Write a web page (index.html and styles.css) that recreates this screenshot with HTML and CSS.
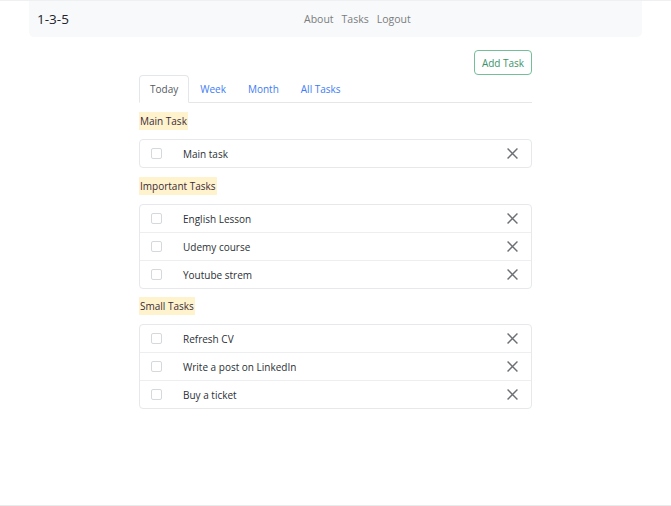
FILE: index.html
```html
<!DOCTYPE html>
<html lang="en">
<head>
<meta charset="utf-8">
<title>1-3-5</title>
<link rel="stylesheet" href="styles.css">
</head>
<body>
<div class="page">
  <nav class="navbar">
    <span class="brand">1-3-5</span>
    <div class="nav-links">
      <a href="#">About</a>
      <a href="#">Tasks</a>
      <a href="#">Logout</a>
    </div>
  </nav>

  <main class="content">
    <div class="toolbar">
      <button class="btn-add">Add Task</button>
    </div>
    <ul class="tabs">
      <li class="tab active">Today</li>
      <li class="tab">Week</li>
      <li class="tab">Month</li>
      <li class="tab">All Tasks</li>
    </ul>

    <section class="group">
      <h2 class="group-title"><mark>Main Task</mark></h2>
      <ul class="list">
        <li class="item"><span class="check"></span><span class="label">Main task</span><svg class="close" viewBox="0 0 10 10"><path d="M0.5 0.5L9.5 9.5M9.5 0.5L0.5 9.5"/></svg></li>
      </ul>
    </section>

    <section class="group">
      <h2 class="group-title"><mark>Important Tasks</mark></h2>
      <ul class="list">
        <li class="item"><span class="check"></span><span class="label">English Lesson</span><svg class="close" viewBox="0 0 10 10"><path d="M0.5 0.5L9.5 9.5M9.5 0.5L0.5 9.5"/></svg></li>
        <li class="item"><span class="check"></span><span class="label">Udemy course</span><svg class="close" viewBox="0 0 10 10"><path d="M0.5 0.5L9.5 9.5M9.5 0.5L0.5 9.5"/></svg></li>
        <li class="item"><span class="check"></span><span class="label">Youtube strem</span><svg class="close" viewBox="0 0 10 10"><path d="M0.5 0.5L9.5 9.5M9.5 0.5L0.5 9.5"/></svg></li>
      </ul>
    </section>

    <section class="group">
      <h2 class="group-title"><mark>Small Tasks</mark></h2>
      <ul class="list">
        <li class="item"><span class="check"></span><span class="label">Refresh CV</span><svg class="close" viewBox="0 0 10 10"><path d="M0.5 0.5L9.5 9.5M9.5 0.5L0.5 9.5"/></svg></li>
        <li class="item"><span class="check"></span><span class="label">Write a post on LinkedIn</span><svg class="close" viewBox="0 0 10 10"><path d="M0.5 0.5L9.5 9.5M9.5 0.5L0.5 9.5"/></svg></li>
        <li class="item"><span class="check"></span><span class="label">Buy a ticket</span><svg class="close" viewBox="0 0 10 10"><path d="M0.5 0.5L9.5 9.5M9.5 0.5L0.5 9.5"/></svg></li>
      </ul>
    </section>
  </main>
  <footer class="footer"></footer>
</div>
</body>
</html>
```

FILE: styles.css
```css
* { box-sizing: border-box; }
html, body { margin: 0; padding: 0; }
body {
  font-family: "Open Sans", "Noto Sans", sans-serif;
  font-size: 10px;
  color: #212529;
  background: #fff;
  border-top: 1px solid #eef0f2;
}
.page {
  height: 505px;
  display: flex;
  flex-direction: column;
}
.navbar {
  margin: 0 29px;
  height: 36px;
  background: #f8f9fa;
  border-radius: 0 0 5px 5px;
  display: flex;
  align-items: center;
  padding: 0 8px;
}
.brand {
  font-size: 13.5px;
  color: #212529;
  width: 267px;
}
.nav-links { display: flex; gap: 8px; }
.nav-links a {
  color: #7a7d80;
  text-decoration: none;
  font-size: 10.5px;
}
.content {
  width: 393px;
  margin: 0 auto;
  flex: 1;
  padding-top: 13px;
}
.toolbar { display: flex; justify-content: flex-end; height: 25px; }
.btn-add {
  font-family: inherit;
  font-size: 10px;
  color: #3a9468;
  background: #fff;
  border: 1px solid #74bf98;
  border-radius: 4px;
  width: 58px;
  height: 25px;
  padding: 0;
}
.tabs {
  list-style: none;
  margin: 0;
  padding: 0;
  display: flex;
  height: 28px;
  border-bottom: 1px solid #e4e7ea;
}
.tab {
  padding: 0 10px;
  line-height: 26px;
  color: #3d7cf5;
  border: 1px solid transparent;
  border-radius: 4px 4px 0 0;
}
.tab.active {
  color: #555a5f;
  border-color: #e4e7ea #e4e7ea #fff;
  margin-bottom: -1px;
  background: #fff;
}
.group { margin-top: 9px; }
.group:last-child { margin-top: 8px; }
.group-title {
  margin: 0 0 9px;
  font-size: 10px;
  font-weight: normal;
  line-height: 18px;
}
.group-title mark {
  background: #fff3cd;
  color: #3a2a3a;
  display: inline-block;
  padding: 0 1px;
}
.list {
  list-style: none;
  margin: 0;
  padding: 0;
  border: 1px solid #e6e8eb;
  border-radius: 4px;
}
.item {
  height: 28px;
  display: flex;
  align-items: center;
  padding: 0 13px 0 11px;
  border-top: 1px solid #eceef0;
}
.item:first-child { border-top: none; height: 27px; }
.check {
  width: 11px;
  height: 11px;
  border: 1px solid #d6d9dc;
  border-radius: 2px;
  margin-right: 21px;
}
.label { flex: 1; color: #2b3035; }
.close {
  width: 11px;
  height: 11px;
  fill: none;
  stroke: #6c7075;
  stroke-width: 1.3;
}
.footer {
  height: 1px;
  background: #eaeaea;
}
```
